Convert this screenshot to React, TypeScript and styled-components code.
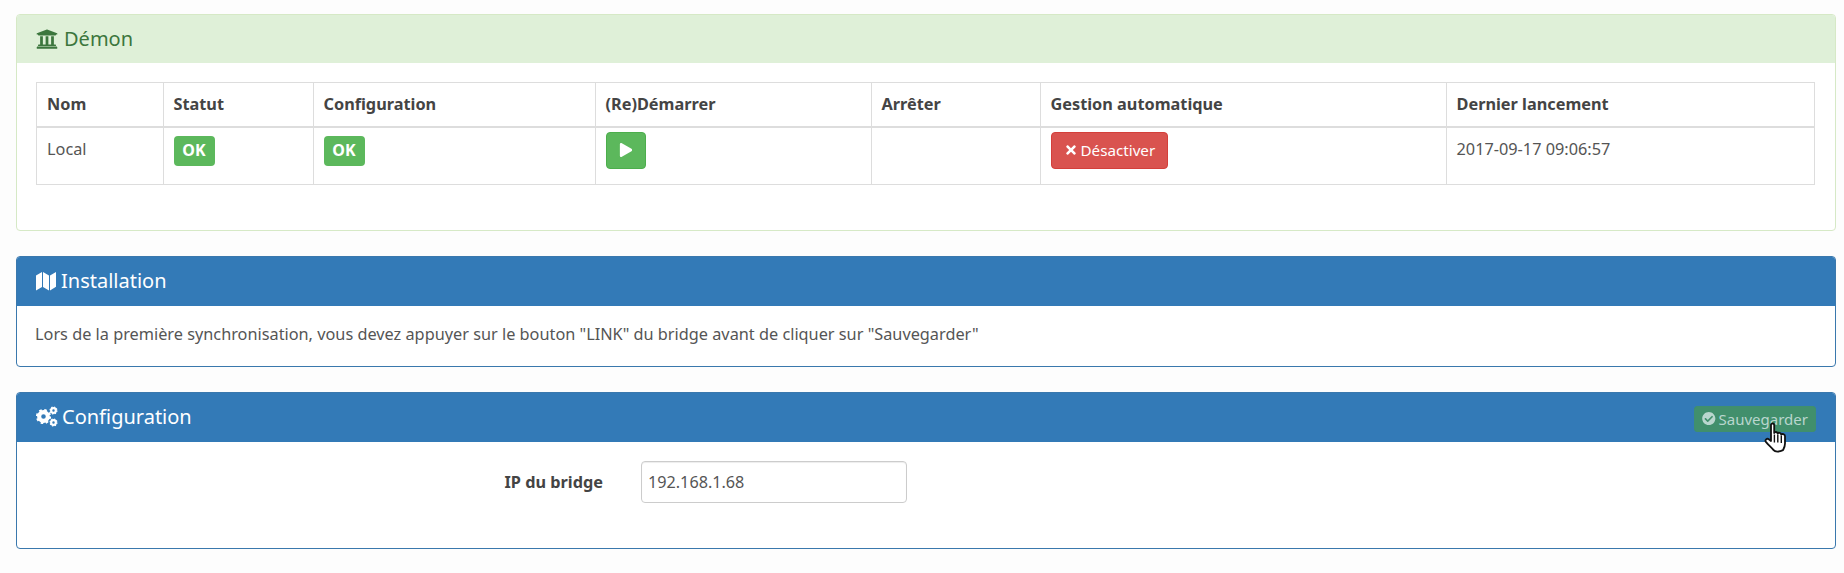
import React from "react";
import styled, { createGlobalStyle } from "styled-components";
import { FaCheckCircle, FaPlay, FaTimes, FaUniversity } from "react-icons/fa";

const GlobalStyle = createGlobalStyle`
  html, body {
    margin: 0;
    background: #fdfdfd;
    color: #555;
    font-family: "Noto Sans", "Open Sans", sans-serif;
    font-size: 16.3px;
    line-height: 23px;
  }
`;

const Page = styled.div`
  width: 1844px;
  height: 573px;
  box-sizing: border-box;
  padding: 14px 8px 0 16px;
  display: flex;
  flex-direction: column;
  gap: 25px;
  overflow: hidden;
  position: relative;
`;

const Panel = styled.section<{ $tone: "success" | "primary" }>`
  background: #fff;
  border: 1px solid ${(p) => (p.$tone === "success" ? "#d6e9c6" : "#3a78ad")};
  border-radius: 4px;
  overflow: hidden;
`;

const PanelHeading = styled.header<{ $tone: "success" | "primary"; $height: number }>`
  display: flex;
  align-items: center;
  justify-content: space-between;
  height: ${(p) => p.$height}px;
  box-sizing: border-box;
  padding: 0 19px ${(p) => (p.$tone === "success" ? 0 : 2)}px;
  background: ${(p) => (p.$tone === "success" ? "#dff0d8" : "#337ab7")};
  color: ${(p) => (p.$tone === "success" ? "#3c763d" : "#fff")};
`;

const PanelTitle = styled.h3<{ $gap: number }>`
  display: flex;
  align-items: center;
  gap: ${(p) => p.$gap}px;
  margin: 0;
  font-size: 20px;
  line-height: 22px;
  font-weight: 400;
`;

const PanelBody = styled.div`
  padding: 19px 20px 45px 19px;
`;

const TextBody = styled.div`
  padding: 17px 19px 20px 18px;
`;

const FormBody = styled.div`
  padding: 19px 19px 45px 19px;
`;

const Table = styled.table`
  width: 1778px;
  table-layout: fixed;
  border-collapse: collapse;
  border: 1px solid #ddd;
`;

const HeadCell = styled.th<{ $width: number }>`
  width: ${(p) => p.$width}px;
  box-sizing: border-box;
  height: 44px;
  padding: 0 10px;
  text-align: left;
  font-weight: 700;
  color: #444;
  border: 1px solid #ddd;
  border-bottom: 2px solid #ddd;
`;

const BodyCell = styled.td`
  height: 58px;
  box-sizing: border-box;
  padding: 10px 10px;
  vertical-align: top;
  border: 1px solid #ddd;
`;

const Badge = styled.span`
  display: inline-block;
  margin-top: -2px;
  width: 41px;
  height: 30px;
  line-height: 29px;
  text-align: center;
  font-size: 16px;
  font-weight: 700;
  color: #fff;
  background: #5cb85c;
  border-radius: 4px;
`;

const ActionButton = styled.button<{ $color: string; $border: string }>`
  display: inline-flex;
  align-items: center;
  justify-content: center;
  gap: 3px;
  margin-top: -6px;
  height: 37px;
  min-width: 38px;
  padding: 0 12px;
  border: 1px solid ${(p) => p.$border};
  border-radius: 4px;
  background: ${(p) => p.$color};
  color: #fff;
  font-family: inherit;
  font-size: 15.2px;
`;

const SaveButton = styled.button`
  display: inline-flex;
  align-items: center;
  gap: 3px;
  height: 26px;
  width: 122px;
  box-sizing: border-box;
  margin-top: 4px;
  padding: 0 7px;
  border: 1px solid #3f8f6e;
  border-radius: 3px;
  background: #418f6c;
  color: #b9d6ce;
  font-family: inherit;
  font-size: 15px;
`;

const FormRow = styled.div`
  display: flex;
  align-items: center;
  gap: 38px;
`;

const FormLabel = styled.label`
  width: 567px;
  text-align: right;
  font-weight: 700;
  color: #444;
`;

const TextInput = styled.input`
  width: 266px;
  height: 42px;
  box-sizing: border-box;
  padding: 0 6px;
  border: 1px solid #ccc;
  border-radius: 4px;
  background: #fff;
  color: #555;
  font-family: inherit;
  font-size: 16.2px;
  box-shadow: inset 0 1px 1px rgba(0, 0, 0, 0.075);
`;

const Cursor = styled.svg`
  position: absolute;
  left: 1764px;
  top: 422px;
`;

const columns = [
  { label: "Nom", width: 126.5 },
  { label: "Statut", width: 150 },
  { label: "Configuration", width: 282 },
  { label: "(Re)Démarrer", width: 276 },
  { label: "Arrêter", width: 169 },
  { label: "Gestion automatique", width: 406 },
  { label: "Dernier lancement", width: 368.5 },
];

const MapIcon = () => (
  <svg width="20" height="20" viewBox="0 0 20 20" fill="currentColor">
    <path d="M0 4.5 6 1v15l-6 3.5zM7 1l6 3.5v15L7 16zM14 4.5 20 1v14.8L14 19.5z" />
  </svg>
);

const Gear = ({ x, y, r }: { x: number; y: number; r: number }) => {
  const dash = (r * 0.85 * 2 * Math.PI) / 16;
  return (
    <g fill="none" stroke="currentColor">
      <circle cx={x} cy={y} r={r * 0.58} strokeWidth={r * 0.55} />
      <circle cx={x} cy={y} r={r * 0.85} strokeWidth={r * 0.32} strokeDasharray={`${dash} ${dash}`} />
    </g>
  );
};

const GearsIcon = () => (
  <svg width="22" height="21" viewBox="0 0 22 21">
    <Gear x={7.5} y={10.5} r={7.5} />
    <Gear x={17.5} y={4.5} r={4} />
    <Gear x={17.5} y={16.5} r={4} />
  </svg>
);

const HandCursor = () => (
  <Cursor width="23" height="31" viewBox="0 0 23 30">
    <path
      d="M7 2.5 C7 .5 10.2 .5 10.2 2.5 L10.2 10.5 C10.8 9 13.4 9.2 13.7 11 C14.4 9.8 16.8 10 17.2 12 C18.2 11 20.8 11.5 21 13.6 L21 21 C21 24 20 25.6 19 27.6 C15 29.6 11 29.4 9.6 27.6 C7.6 25 4.4 22.6 1.9 19.4 C.6 17.6 2.9 15.4 4.8 16.7 L7 18.5 Z"
      fill="#fff"
      stroke="#111"
      strokeWidth="1.8"
      strokeLinejoin="round"
    />
    <path d="M10.4 12v8M13.8 12v8M17.3 13v7.5" stroke="#111" strokeWidth="1.4" fill="none" />
  </Cursor>
);

export default function App() {
  return (
    <>
      <GlobalStyle />
      <Page>
        <Panel $tone="success">
          <PanelHeading $tone="success" $height={48}>
            <PanelTitle $gap={6}>
              <FaUniversity size={22} /> Démon
            </PanelTitle>
          </PanelHeading>
          <PanelBody>
            <Table>
              <thead>
                <tr>
                  {columns.map((column) => (
                    <HeadCell key={column.label} $width={column.width}>
                      {column.label}
                    </HeadCell>
                  ))}
                </tr>
              </thead>
              <tbody>
                <tr>
                  <BodyCell>Local</BodyCell>
                  <BodyCell>
                    <Badge>OK</Badge>
                  </BodyCell>
                  <BodyCell>
                    <Badge>OK</Badge>
                  </BodyCell>
                  <BodyCell>
                    <ActionButton $color="#5cb85c" $border="#4cae4c">
                      <FaPlay size={14} />
                    </ActionButton>
                  </BodyCell>
                  <BodyCell />
                  <BodyCell>
                    <ActionButton $color="#d9534f" $border="#d43f3a">
                      <FaTimes size={14} /> Désactiver
                    </ActionButton>
                  </BodyCell>
                  <BodyCell>2017-09-17 09:06:57</BodyCell>
                </tr>
              </tbody>
            </Table>
          </PanelBody>
        </Panel>

        <Panel $tone="primary">
          <PanelHeading $tone="primary" $height={49}>
            <PanelTitle $gap={5}>
              <MapIcon /> Installation
            </PanelTitle>
          </PanelHeading>
          <TextBody>
            Lors de la première synchronisation, vous devez appuyer sur le bouton "LINK" du bridge avant de cliquer sur "Sauvegarder"
          </TextBody>
        </Panel>

        <Panel $tone="primary">
          <PanelHeading $tone="primary" $height={49}>
            <PanelTitle $gap={4}>
              <GearsIcon /> Configuration
            </PanelTitle>
            <SaveButton>
              <FaCheckCircle size={15} /> Sauvegarder
            </SaveButton>
          </PanelHeading>
          <FormBody>
            <FormRow>
              <FormLabel>IP du bridge</FormLabel>
              <TextInput defaultValue="192.168.1.68" />
            </FormRow>
          </FormBody>
        </Panel>
        <HandCursor />
      </Page>
    </>
  );
}
